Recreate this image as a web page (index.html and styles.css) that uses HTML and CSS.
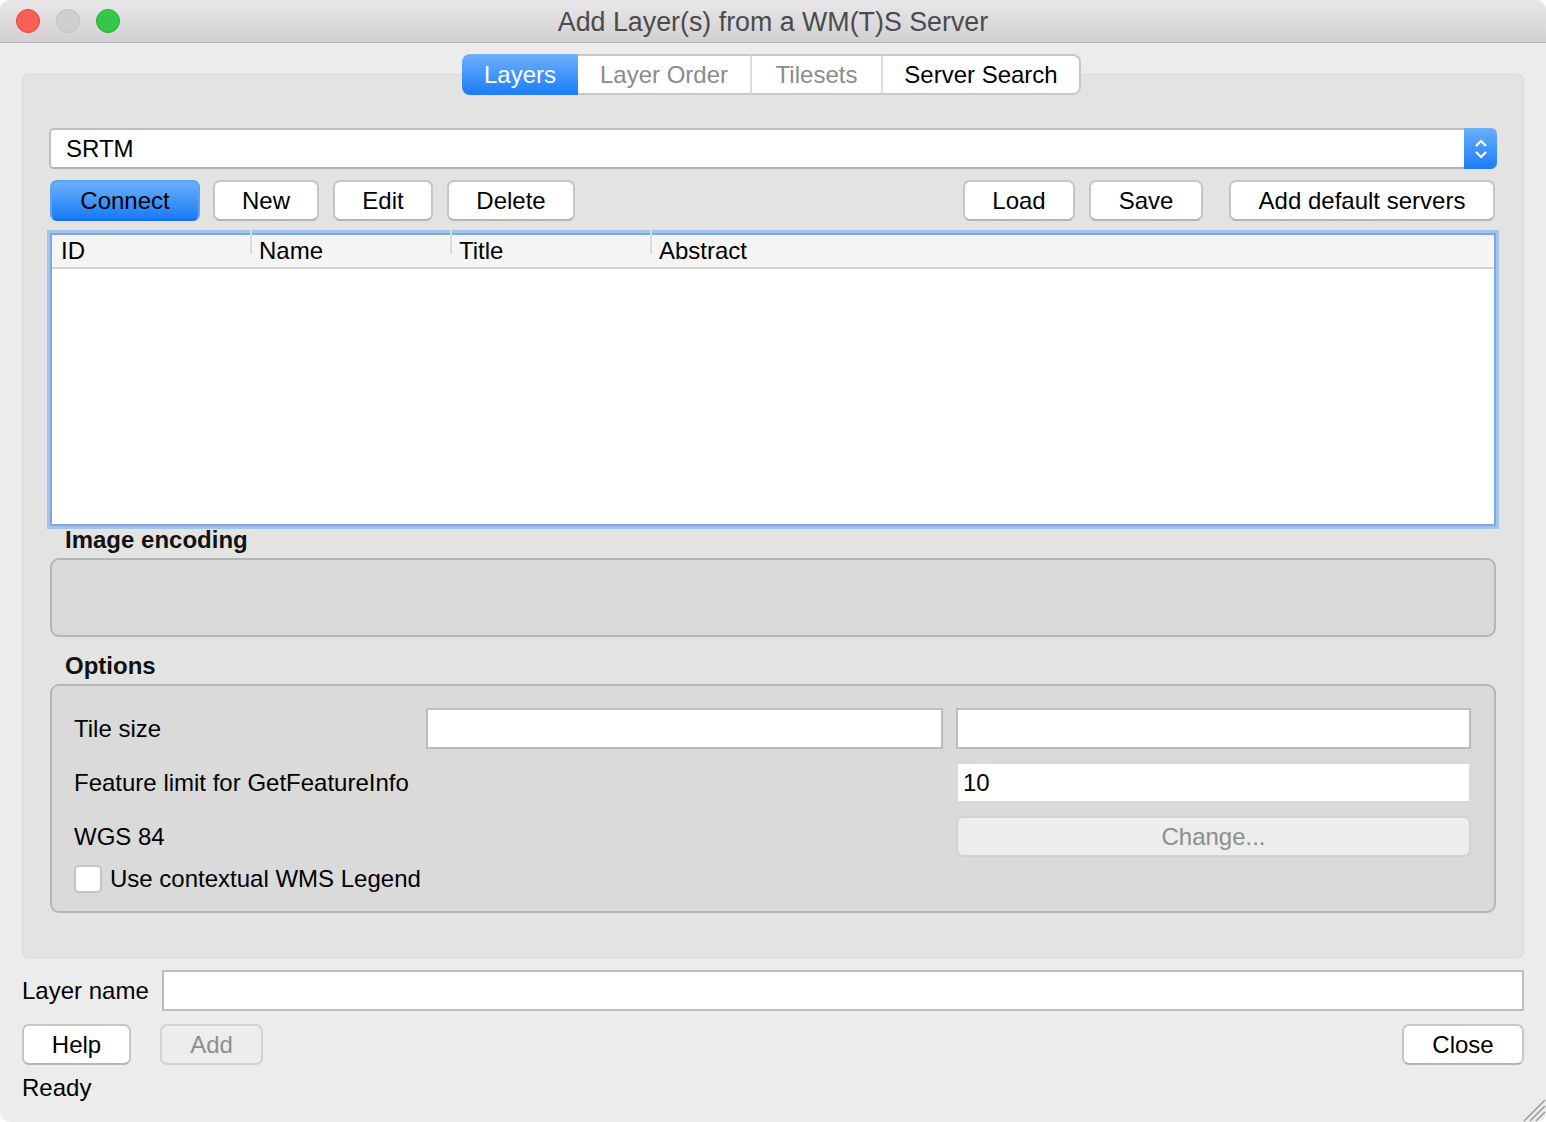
FILE: index.html
```html
<!DOCTYPE html>
<html>
<head>
<meta charset="utf-8">
<title>Add Layer(s) from a WM(T)S Server</title>
<link rel="stylesheet" href="styles.css">
</head>
<body>
<div class="window">
  <div class="titlebar">
    <div class="lights">
      <span class="light red"></span>
      <span class="light grey"></span>
      <span class="light green"></span>
    </div>
    <div class="title">Add Layer(s) from a WM(T)S Server</div>
  </div>
  <div class="content">
    <div class="tabs">
      <div class="tab active t1">Layers</div>
      <div class="tab dim t2">Layer Order</div>
      <div class="tab dim t3">Tilesets</div>
      <div class="tab t4">Server Search</div>
    </div>
    <div class="panel">
      <div class="combo">
        <span class="combo-text">SRTM</span>
        <span class="stepper">
          <svg width="16" height="24" viewBox="0 0 16 24"><path d="M3 9 L8 4 L13 9" fill="none" stroke="#fff" stroke-width="2.2"/><path d="M3 15 L8 20 L13 15" fill="none" stroke="#fff" stroke-width="2.2"/></svg>
        </span>
      </div>
      <div class="btnrow">
        <div class="btn primary w-connect">Connect</div>
        <div class="btn w-new">New</div>
        <div class="btn w-edit">Edit</div>
        <div class="btn w-delete">Delete</div>
        <div class="spacer"></div>
        <div class="btn w-load">Load</div>
        <div class="btn w-save">Save</div>
        <div class="btn w-adddef">Add default servers</div>
      </div>
      <div class="table">
        <div class="thead">
          <div class="th c1">ID</div>
          <div class="th c2">Name</div>
          <div class="th c3">Title</div>
          <div class="th c4">Abstract</div>
        </div>
      </div>
      <div class="glabel first">Image encoding</div>
      <div class="group enc"></div>
      <div class="glabel second">Options</div>
      <div class="group opts">
        <div class="optgrid">
          <div class="olabel">Tile size</div>
          <div class="field"></div>
          <div class="field"></div>
          <div class="olabel span2">Feature limit for GetFeatureInfo</div>
          <div class="field val">10</div>
          <div class="olabel span2">WGS 84</div>
          <div class="btn disabled change">Change...</div>
        </div>
        <div class="checkrow">
          <span class="checkbox"></span>
          <span class="checklabel">Use contextual WMS Legend</span>
        </div>
      </div>
    </div>
    <div class="namerow">
      <div class="namelabel">Layer name</div>
      <div class="field grow"></div>
    </div>
    <div class="bottomrow">
      <div class="btn w-help">Help</div>
      <div class="btn disabled w-add">Add</div>
      <div class="spacer"></div>
      <div class="btn w-close">Close</div>
    </div>
    <div class="status">Ready</div>
  </div>
  <svg class="grip" width="26" height="26" viewBox="0 0 26 26">
    <path d="M4 25 L25 4 M10 25 L25 10 M16 25 L25 16 M22 25 L25 22" stroke="#9a9a9a" stroke-width="1.5"/>
  </svg>
</div>
</body>
</html>
```
FILE: styles.css
```css
html, body {
  margin: 0;
  padding: 0;
  background: #ffffff;
}
body {
  font-family: "Liberation Sans", Arial, sans-serif;
  font-size: 24px;
  color: #000;
}
.window {
  position: relative;
  width: 1546px;
  height: 1122px;
  background: #ececec;
  border-radius: 10px;
  overflow: hidden;
}
.titlebar {
  height: 42px;
  border-bottom: 1px solid #b3b1b3;
  background: linear-gradient(#e9e7e9, #d2d0d2);
  display: flex;
  align-items: center;
  position: relative;
}
.lights {
  display: flex;
  gap: 16px;
  padding-left: 16px;
}
.light {
  width: 22px;
  height: 22px;
  border-radius: 50%;
  display: block;
  border: 1px solid;
}
.red { background: #fc5f57; border-color: #e0443e; }
.grey { background: #d0cfd0; border-color: #bfbebf; }
.green { background: #34c84a; border-color: #27aa35; }
.title {
  flex: 1;
  text-align: center;
  font-size: 26.8px;
  color: #4b4b4b;
  margin-left: -120px;
  line-height: 1;
  padding-top: 2px;
}
.content {
  padding: 0 22px;
}
.tabs {
  display: flex;
  justify-content: center;
  margin-top: 11px;
  padding-right: 3px;
  position: relative;
  z-index: 2;
}
.tab {
  height: 37px;
  border: 2px solid #c8c8c8;
  border-left: none;
  background: #fff;
  display: flex;
  align-items: center;
  justify-content: center;
  line-height: 1;
  box-sizing: content-box;
}
.tab.t1 { width: 116px; border: none; height: 41px; border-radius: 8px 0 0 8px;
  background: linear-gradient(#6db1fb, #1a7cf8); color: #fff; }
.tab.t2 { width: 172px; border-right: 2px solid #dcdcdc; }
.tab.t3 { width: 129px; border-right: 2px solid #dcdcdc; }
.tab.t4 { width: 196px; border-radius: 0 8px 8px 0; }
.tab.dim { color: #8b8b8b; }
.panel {
  margin-top: -21px;
  background: #e3e3e3;
  border: 1px solid #d6d6d6;
  border-radius: 6px;
  padding: 53px 26px 44px 26px;
}
.combo {
  height: 37px;
  border: 2px solid #bfbfbf;
  border-bottom-color: #b0b0b0;
  border-radius: 5px;
  background: #fff;
  display: flex;
  align-items: center;
}
.combo-text {
  flex: 1;
  padding-left: 15px;
  line-height: 1;
}
.stepper {
  width: 33px;
  height: 41px;
  margin: -2px -2px -2px 0;
  background: linear-gradient(#6aaffb, #1b7df8);
  border-radius: 0 7px 7px 0;
  display: flex;
  align-items: center;
  justify-content: center;
}
.btnrow {
  display: flex;
  margin-top: 11px;
  padding: 0 2px 0 1px;
}
.spacer { flex: 1; }
.btn {
  height: 37px;
  border: 2px solid #c6c6c6;
  border-bottom-color: #b4b4b4;
  border-radius: 7px;
  background: #fff;
  display: flex;
  align-items: center;
  justify-content: center;
  line-height: 1;
  box-sizing: content-box;
}
.btn.primary {
  background: linear-gradient(#6bb0fb, #187bf8);
  border-color: #5aa2f5;
  border-bottom-color: #1a6fe0;
}
.btn.disabled {
  background: #ededed;
  border-color: #d2d2d2;
  color: #8e8e8e;
}
.w-connect { width: 146px; margin-right: 13px; }
.w-new { width: 102px; margin-right: 14px; }
.w-edit { width: 96px; margin-right: 14px; }
.w-delete { width: 124px; }
.w-load { width: 108px; margin-right: 14px; }
.w-save { width: 110px; margin-right: 26px; }
.w-adddef { width: 262px; }
.table {
  margin: 12px 1px 0 1px;
  height: 289px;
  border: 2px solid #7ea8de;
  box-shadow: 0 0 0 3px #a2c5ee;
  background: #fff;
}
.thead {
  display: flex;
  height: 32px;
  background: #f5f5f5;
  border-bottom: 2px solid #d3d3d3;
  align-items: center;
}
.th {
  position: relative;
  padding-left: 9px;
  line-height: 1;
  box-sizing: border-box;
}
.th.c1 { width: 198px; }
.th.c2, .th.c3 { width: 200px; }
.th.c2::before, .th.c3::before, .th.c4::before {
  content: "";
  position: absolute;
  left: 0;
  top: -9px;
  height: 24px;
  width: 2px;
  background: #dcdcdc;
}
.glabel {
  font-weight: bold;
  padding-left: 16px;
  line-height: 24px;
  height: 24px;
  color: #111;
}
.glabel.first { margin-top: 2px; }
.glabel.second { margin-top: 17px; }
.group {
  margin: 6px 1px 0 1px;
  border: 2px solid #b5b5b5;
  border-radius: 9px;
  background: #dadada;
  box-sizing: border-box;
}
.group.enc { height: 79px; }
.group.opts {
  height: 229px;
  padding: 22px 23px 0 22px;
}
.optgrid {
  display: grid;
  grid-template-columns: 339px 517px 515px;
  column-gap: 13px;
  row-gap: 13px;
  grid-auto-rows: 41px;
}
.olabel {
  display: flex;
  align-items: center;
  line-height: 1;
}
.olabel.span2 { grid-column: 1 / span 2; }
.field {
  border: 2px solid #bdbdbd;
  background: #fff;
  display: flex;
  align-items: center;
  line-height: 1;
  box-sizing: border-box;
  height: 41px;
}
.field.val { padding-left: 5px; border-color: #d9d9d9; }
.btn.change {
  height: 37px;
  border-radius: 7px;
}
.checkrow {
  display: flex;
  align-items: center;
  margin-top: 4px;
  height: 36px;
}
.checkbox {
  width: 24px;
  height: 24px;
  border: 2px solid #c4c4c4;
  border-radius: 5px;
  background: #fff;
  display: block;
}
.checklabel {
  margin-left: 8px;
  line-height: 1;
}
.namerow {
  display: flex;
  align-items: center;
  margin-top: 12px;
}
.namelabel {
  width: 140px;
  line-height: 1;
}
.field.grow { flex: 1; }
.bottomrow {
  display: flex;
  margin-top: 13px;
  gap: 29px;
}
.w-help { width: 105px; }
.w-add { width: 99px; }
.w-close { width: 118px; }
.status {
  margin-top: 11px;
  line-height: 24px;
}
.grip {
  position: absolute;
  right: 0;
  bottom: 0;
}
```
